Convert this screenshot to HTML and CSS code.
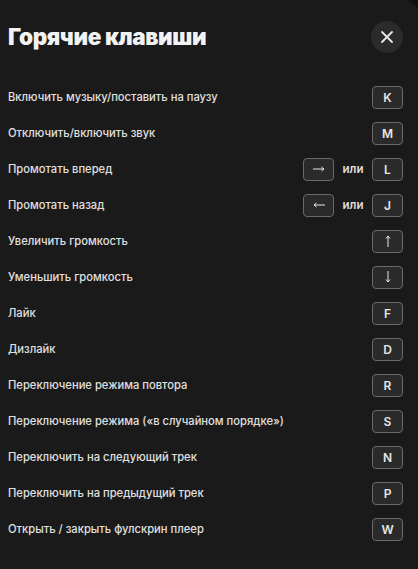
FILE: index.html
```html
<!DOCTYPE html>
<html lang="ru">
<head>
  <meta charset="UTF-8">
  <meta name="viewport" content="width=device-width, initial-scale=1.0">
  <title>Горячие клавиши</title>
  <link rel="stylesheet" href="styles.css">
</head>
<body>
  <div class="modal">
    <div class="modal-head">
      <h1>Горячие клавиши</h1>
      <button class="close" aria-label="Закрыть">
        <svg width="14" height="14" viewBox="0 0 14 14"><path d="M2 2L12 12M12 2L2 12" stroke="#e8e8e8" stroke-width="1.8" stroke-linecap="round"/></svg>
      </button>
    </div>
    <ul class="hotkeys">
      <li><span>Включить музыку/поставить на паузу</span><div class="keys"><kbd>K</kbd></div></li>
      <li><span>Отключить/включить звук</span><div class="keys"><kbd>M</kbd></div></li>
      <li><span>Промотать вперед</span><div class="keys"><kbd><svg width="12" height="6" viewBox="0 0 12 6"><path d="M0 3H11M8.5 1L11 3L8.5 5" stroke="#e6e6e6" stroke-width="1" fill="none"/></svg></kbd><em>или</em><kbd>L</kbd></div></li>
      <li><span>Промотать назад</span><div class="keys"><kbd><svg width="12" height="6" viewBox="0 0 12 6"><path d="M12 3H1M3.5 1L1 3L3.5 5" stroke="#e6e6e6" stroke-width="1" fill="none"/></svg></kbd><em>или</em><kbd>J</kbd></div></li>
      <li><span>Увеличить громкость</span><div class="keys"><kbd><svg width="6" height="12" viewBox="0 0 6 12"><path d="M3 12V1M1 3.5L3 1L5 3.5" stroke="#e6e6e6" stroke-width="1" fill="none"/></svg></kbd></div></li>
      <li><span>Уменьшить громкость</span><div class="keys"><kbd><svg width="6" height="12" viewBox="0 0 6 12"><path d="M3 0V11M1 8.5L3 11L5 8.5" stroke="#e6e6e6" stroke-width="1" fill="none"/></svg></kbd></div></li>
      <li><span>Лайк</span><div class="keys"><kbd>F</kbd></div></li>
      <li><span>Дизлайк</span><div class="keys"><kbd>D</kbd></div></li>
      <li><span>Переключение режима повтора</span><div class="keys"><kbd>R</kbd></div></li>
      <li><span>Переключение режима («в случайном порядке»)</span><div class="keys"><kbd>S</kbd></div></li>
      <li><span>Переключить на следующий трек</span><div class="keys"><kbd>N</kbd></div></li>
      <li><span>Переключить на предыдущий трек</span><div class="keys"><kbd>P</kbd></div></li>
      <li><span>Открыть / закрыть фулскрин плеер</span><div class="keys"><kbd>W</kbd></div></li>
    </ul>
  </div>
</body>
</html>
```

FILE: styles.css
```css
body {
  margin: 0;
  background: #101010;
  font-family: Inter, "Noto Sans", sans-serif;
  color: #e6e6e6;
}
.modal {
  height: 569px;
  box-sizing: border-box;
  background: #1a1a1a;
  border-radius: 0 14px 0 0;
  padding: 0 15px 0 8px;
}
.modal-head {
  height: 79px;
  display: flex;
  align-items: center;
  justify-content: space-between;
  padding-bottom: 6px;
  box-sizing: border-box;
}
.modal-head h1 {
  margin: 0;
  font-size: 22.5px;
  font-weight: 900;
  letter-spacing: -0.4px;
  color: #f2f2f2;
}
.close {
  width: 32px;
  height: 32px;
  border: none;
  border-radius: 50%;
  background: #2b2b2b;
  display: flex;
  align-items: center;
  justify-content: center;
  padding: 0;
}
.hotkeys {
  list-style: none;
  margin: 0;
  padding: 0;
}
.hotkeys li {
  height: 36px;
  display: flex;
  align-items: center;
  justify-content: space-between;
  font-size: 11.2px;
  font-weight: 500;
  color: #e0e0e0;
}
.keys {
  display: flex;
  align-items: center;
}
.keys em {
  font-style: normal;
  font-weight: 600;
  font-size: 11.5px;
  width: 38px;
  text-align: center;
}
kbd {
  width: 31px;
  height: 23px;
  box-sizing: border-box;
  border: 1px solid #6a6a6a;
  border-radius: 4px;
  background: #2a2a2a;
  display: flex;
  align-items: center;
  justify-content: center;
  font-family: Inter, sans-serif;
  font-size: 12px;
  font-weight: 600;
  color: #e6e6e6;
}
```
